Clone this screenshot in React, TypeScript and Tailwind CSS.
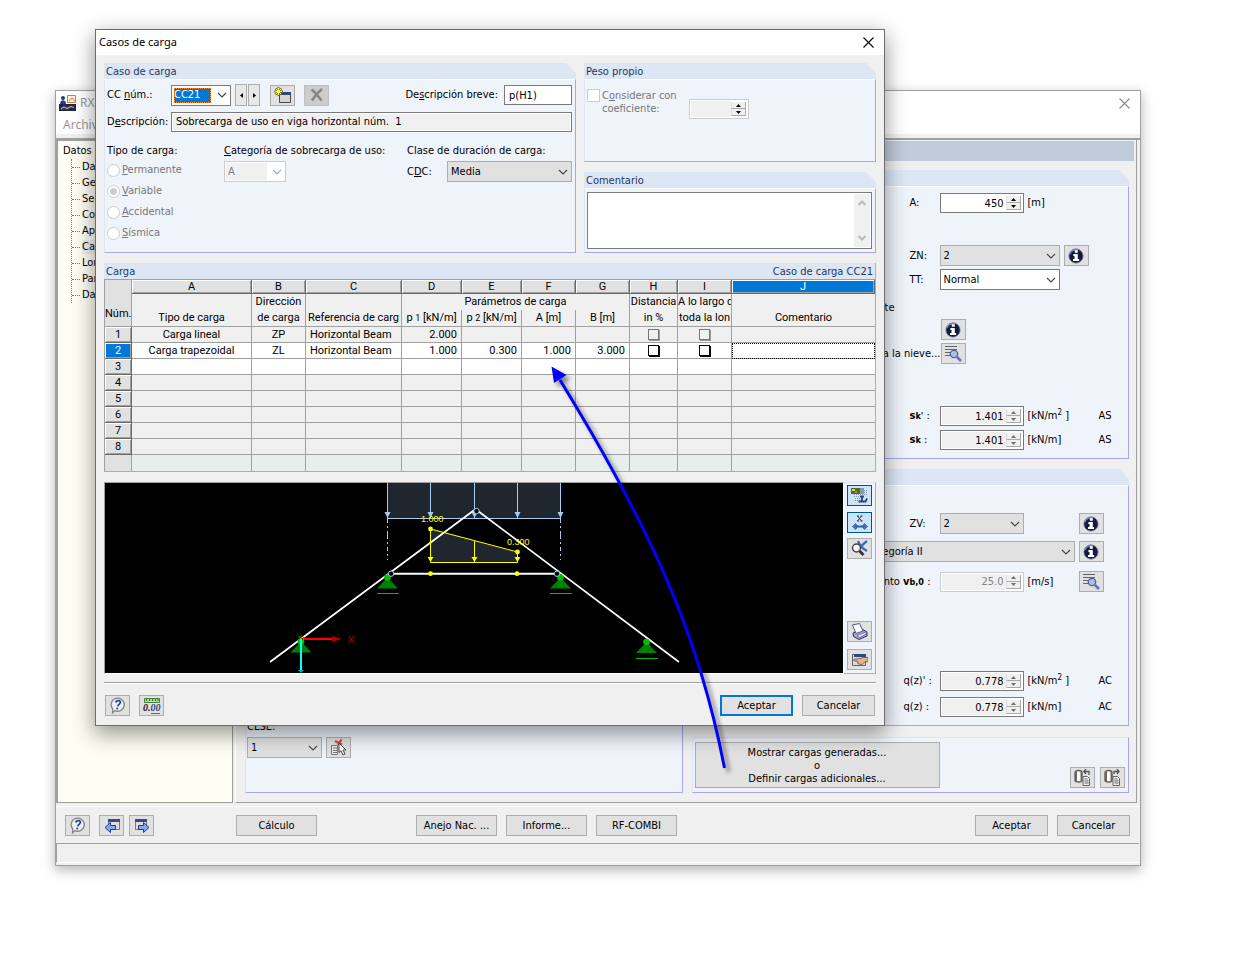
import React, { ReactNode } from "react";

const ICON_BUTTON = "flex h-[21px] w-[25px] shrink-0 items-center justify-center border border-[#adadad] bg-[#e1e1e1]";
const TEXT_BUTTON = "flex h-[21px] shrink-0 items-center justify-center border border-[#adadad] bg-[#e1e1e1]";

function IconButton({ label, children, active }: { label: string; children: ReactNode; active?: boolean }) {
  return (
    <button
      type="button"
      aria-label={label}
      className={
        active
          ? "flex h-[21px] w-[25px] shrink-0 items-center justify-center border border-[#005499] bg-[#cce4f7]"
          : ICON_BUTTON
      }
    >
      {children}
    </button>
  );
}

function Chevron({ className = "text-[#444]" }: { className?: string }) {
  return (
    <svg className={"pointer-events-none absolute top-1/2 right-1 -translate-y-1/2 " + className} width="10" height="6" viewBox="0 0 10 6" fill="none" stroke="currentColor" strokeWidth="1.1">
      <path d="M1 1l4 4 4-4" />
    </svg>
  );
}

function Select({
  label,
  value,
  width,
  tone = "gray",
  disabled,
}: {
  label: string;
  value: string;
  width: string;
  tone?: "gray" | "white";
  disabled?: boolean;
}) {
  const look = disabled
    ? "border-[#cccccc] bg-white bg-[linear-gradient(#f0f0f0,#f0f0f0)] bg-[length:41px_17px] bg-[position:1px_1px] bg-no-repeat text-[#838383]"
    : tone === "gray"
      ? "border-[#adadad] bg-[#e1e1e1]"
      : "border-[#7a7a7a] bg-white";
  return (
    <span className={"relative block shrink-0 " + width}>
      <select aria-label={label} disabled={disabled} className={"block h-[21px] w-full appearance-none border pl-[3px] opacity-100 " + look}>
        <option>{value}</option>
      </select>
      <Chevron className={disabled ? "text-[#a8a8a8]" : "text-[#444]"} />
    </span>
  );
}

function SpinButtons({ label, tone }: { label: string; tone: string }) {
  return (
    <span className={"my-px mr-px flex w-[15px] shrink-0 flex-col " + tone}>
      <button type="button" aria-label={label + " +"} className="flex h-2 w-full items-center justify-center border-r border-b border-l border-[#a9a9a9] border-l-[#e0e0e0] bg-[#f0f0f0]">
        <svg width="5" height="3" viewBox="0 0 5 3" fill="currentColor"><path d="M0 3h5L2.500 0z" /></svg>
      </button>
      <button type="button" aria-label={label + " -"} className="flex h-2 w-full items-center justify-center border-r border-b border-l border-[#a9a9a9] border-l-[#e0e0e0] bg-[#f0f0f0]">
        <svg width="5" height="3" viewBox="0 0 5 3" fill="currentColor"><path d="M0 0h5L2.500 3z" /></svg>
      </button>
    </span>
  );
}

function Spin({ label, value, width, look = "readonly" }: { label: string; value: string; width: string; look?: "edit" | "readonly" | "disabled" }) {
  const frame = look === "disabled" ? "border-[#cccccc]" : "border-[#7a7a7a]";
  const field = look === "edit" ? "bg-white" : look === "disabled" ? "bg-[#f0f0f0] text-[#838383]" : "bg-[#f0f0f0]";
  return (
    <span className={"flex h-5 shrink-0 border bg-white p-px " + frame + " " + width}>
      <input aria-label={label} defaultValue={value} readOnly={look !== "edit"} disabled={look === "disabled"} className={"h-full w-0 min-w-0 flex-1 pr-[2px] text-right " + field} />
      <SpinButtons label={label} tone={look === "edit" ? "text-black" : "text-[#707070]"} />
    </span>
  );
}

function Group({ title, className = "", children }: { title?: ReactNode; className?: string; children?: ReactNode }) {
  return (
    <section className={"flex min-w-0 flex-col " + className}>
      <header className="flex h-4 shrink-0 items-center bg-[#dce6f5] px-[2px] pt-px text-[#1e395b] [clip-path:polygon(0_0,calc(100%-10px)_0,100%_10px,100%_100%,0_100%)]">
        <h2>{title}</h2>
      </header>
      <div className="flex-1 border-t border-r border-b border-l border-t-white border-r-[#a6a6ee] border-b-[#a6a6ee] border-l-[#dce6f5] bg-[#eff3fa]">{children}</div>
    </section>
  );
}

function InfoIcon() {
  return (
    <svg width="16" height="16" viewBox="0 0 16 16">
      <circle cx="8" cy="8" r="7.2" fill="#141c3c" stroke="#8c94b4" strokeWidth=".8" />
      <path d="M2 6a6 5 0 0 1 8-4" fill="none" stroke="#7484c4" strokeWidth="1.6" />
      <path d="M6.800 2.300h3v2.500h-3zM5.400 6h4.400v5h1.300v2H5v-2h1.500V8H5.400z" fill="#fff" />
    </svg>
  );
}

function ListSearchIcon() {
  return (
    <svg width="17" height="16" viewBox="0 0 17 16" fill="none">
      <path d="M0 .5h12M0 3.500h12M0 6.500h5M0 9.500h5" stroke="#666" />
      <circle cx="9" cy="8" r="3.700" fill="#a9c2ec" stroke="#50618e" strokeWidth="1.300" />
      <path d="M12 11l4 4" stroke="#5874bb" strokeWidth="2.500" />
    </svg>
  );
}

function HelpIcon() {
  return (
    <svg width="17" height="17" viewBox="0 0 17 17">
      <path d="M9 1.200a6.500 6.500 0 1 1-3 12.400L3.500 16l.3-4A6.500 6.500 0 0 1 9 1.200z" fill="#f0f0f2" stroke="#858585" strokeWidth="1.300" />
      <path d="M6.800 5.500c.4-2.600 5-2.400 4.500.2-.3 1.600-2.300 1.800-2.600 3.600M8.400 10.700l-.3 1.600" fill="none" stroke="#27449a" strokeWidth="1.800" />
    </svg>
  );
}

function WindowArrowIcon({ forward }: { forward?: boolean }) {
  return (
    <svg width="16" height="17" viewBox="0 0 16 17">
      <path d={forward ? "M1.500 2.500h11v10h-11z" : "M4.500 2.500h11v10h-11z"} fill="#ddd" stroke="#777" />
      <path d={forward ? "M1 2h12v3H1z" : "M4 2h12v3H4z"} fill="#3b4b78" />
      <path d={forward ? "M4.500 8.500h5v-3l5.500 5-5.500 5v-3h-5z" : "M11.500 8.500h-5v-3L1 10.500l5.500 5v-3h5z"} fill="#82a9f4" stroke="#1c3d91" />
    </svg>
  );
}

function DatabaseIcon({ forward }: { forward?: boolean }) {
  return (
    <svg width="17" height="17" viewBox="0 0 17 17" fill="none">
      <path d="M1 3.500C1 .8 8 .8 8 3.500v8c0 2-7 2-7 0z" fill="#fff" stroke="#5b544d" strokeWidth="1.300" />
      <path d="M1 3.500L3 2v11l-2-1zM6.500 2L8 3.500V12l-1.500 1z" fill="#6d645c" />
      <path d="M9 7.500h4.500l2 2v7H9z" fill="#eee" stroke="#666" />
      <path d="M10.500 10h3M10.500 12h4M10.500 14h4" stroke="#666" />
      <path d={forward ? "M10 5V2.500h5M13 0l2 2.500L13 5" : "M15 6V2.500h-5M12 0L9.800 2.500 12 5"} stroke="#555" strokeWidth="1.300" />
    </svg>
  );
}

function NewIcon() {
  return (
    <svg width="18" height="17" viewBox="0 0 18 17" fill="none">
      <path d="M5.500 6.500h11v9h-11z" fill="#d4d4d4" stroke="#484848" />
      <path d="M5 5h12v3H5z" fill="#33496f" />
      <path d="M4.500 0v9M0 4.500h9M1.500 1.500l6 6M7.500 1.500l-6 6" stroke="#777830" strokeWidth="2" />
      <path d="M4.500 1v7M1 4.500h7M2 2l5 5M7 2L2 7" stroke="#ffff37" />
    </svg>
  );
}

function DeleteIcon() {
  return (
    <svg width="14" height="14" viewBox="0 0 14 14" fill="none">
      <path d="M1.500 1.500c4 3 7 7 10 11M12 1C8 4 4.500 8 2 12.500" stroke="#888783" strokeWidth="2.600" />
    </svg>
  );
}

function UnitsIcon() {
  return (
    <svg width="18" height="18" viewBox="0 0 18 18">
      <path d="M1.500 1.500h15v4h-15z" fill="#a5e88a" stroke="#4b8445" />
      <path d="M3.500 2v2M6.500 2v2M9.500 2v2M12.500 2v2M15 2v2" stroke="#32672d" />
      <text x="0" y="14" fontSize="10" fontStyle="italic" fontWeight="700" fontFamily="Liberation Serif, serif" fill="#222">0.<tspan fill="#304879">00</tspan></text>
      <path d="M8 16.500h9" stroke="#52698d" />
    </svg>
  );
}

function RenderIcon() {
  return (
    <svg width="17" height="17" viewBox="0 0 17 17" fill="none">
      <path d="M3 3.500h14M3 5.500h14M3 7.500h13M3 9.500h10M4 11.500h7M4 13.500h8" stroke="#7f97a8" strokeDasharray="1 1" />
      <path d="M0 1h9v6H0z" fill="#3e7139" />
      <path d="M1 2h3v2H1z" fill="#dedb35" />
      <path d="M4 4h2v2H4z" fill="#e9692d" />
      <path d="M9 1h4v6H9z" fill="#8a9aa0" />
      <path d="M9 9.500h4M11 10v4.500h3.500l1.500-3M7.500 14.500h5" stroke="#29486f" strokeWidth="1.800" />
    </svg>
  );
}

function DimensionIcon() {
  return (
    <svg width="16" height="16" viewBox="0 0 16 16" fill="none">
      <path d="M5.500 1l4 5M9.500 1l-4 5M5 1h2M8.500 1h2M5 6h2M8.500 6h2" stroke="#333" />
      <path d="M2 11.500h12" stroke="#365ba8" strokeWidth="2" />
      <path d="M.5 11.500l3-3 1.500 1.500v3l-1.500 1.500zM15.500 11.500l-3-3-1.500 1.500v3l1.500 1.500z" fill="#4872bc" stroke="#254b88" strokeWidth=".6" />
    </svg>
  );
}

function ZoomAxesIcon() {
  return (
    <svg width="17" height="17" viewBox="0 0 17 17" fill="none">
      <path d="M7 1c2 5 5 8 9 10M16 1C12 4 9 7 7 11" stroke="#4168be" strokeWidth="2.200" />
      <circle cx="5.500" cy="8" r="4" fill="#fff" fillOpacity=".8" stroke="#444" strokeWidth="1.400" />
      <path d="M8.500 11l4 4" stroke="#333" strokeWidth="2.800" />
    </svg>
  );
}

function PrinterIcon() {
  return (
    <svg width="17" height="17" viewBox="0 0 17 17" strokeLinejoin="round">
      <path d="M2 10l9-4 5 3v4l-8 3.500-5.500-3z" fill="#a5a5dc" stroke="#33335b" />
      <path d="M1.500 2l7-1.500L12 8l-7 2.500z" fill="#fff" stroke="#555580" />
      <path d="M6 12.500l8-3 1.500 1.500-7 3.500z" fill="#e6e6ff" stroke="#56568d" strokeWidth=".7" />
    </svg>
  );
}

function HandIcon() {
  return (
    <svg width="17" height="14" viewBox="0 0 17 14">
      <path d="M1.500 1.500h13v11h-13z" fill="#d9dad9" stroke="#666" />
      <path d="M3 1h12v3H3z" fill="#2a4886" />
      <path d="M17 4.500h-5L9 5.500l-6 .8c-1 1.500 0 1.700 3 1.700l1 2.700 4 1 3-3h3z" fill="#dfb58e" stroke="#744c32" strokeWidth=".8" />
    </svg>
  );
}

function PickIcon() {
  return (
    <svg width="17" height="17" viewBox="0 0 17 17" fill="none">
      <path d="M1.500 6.500h6v9h-6z" fill="#eee" stroke="#777" />
      <path d="M3 9h4M3 11.500h4M3 13.500h4" stroke="#777" />
      <path d="M5 2l7 3.500M11.500.5L8 6" stroke="#df4444" strokeWidth="2.300" />
      <path d="M9 4v9.500l2-1.700 2 4.200 2-1-2-4h3z" fill="#fff" stroke="#444" />
    </svg>
  );
}

function AppIcon() {
  return (
    <svg width="17" height="16" viewBox="0 0 17 16">
      <path d="M0 9h17v7H0z" fill="#18295f" />
      <circle cx="4" cy="3" r="2" fill="#293e77" />
      <path d="M1 9c0-5 6-5 6 0z" fill="#293e77" />
      <path d="M8.500.5h8v7h-8z" fill="#fff8e7" stroke="#c78141" />
      <path d="M10 6l3-3 3 3M2 14l3-2 3 1.500 4-2 3 1" fill="none" stroke="#ed9e50" strokeWidth="1.300" />
    </svg>
  );
}

function CloseIcon() {
  return (
    <svg width="11" height="11" viewBox="0 0 11 11" fill="none" stroke="currentColor" strokeWidth="1.100">
      <path d="M.5.5l10 10M10.500.5l-10 10" />
    </svg>
  );
}

const treeItems = ["Da", "Ge", "Sec", "Co", "Ap", "Ca", "Lon", "Par", "Da"];

function MainWindow() {
  return (
    <main className="mt-[90px] mr-[93px] ml-[55px] border border-[#a0a0a0] bg-[#f0f0f0] shadow-[0_4px_12px_rgba(0,0,0,0.3)]">
      <div className="h-[43px] bg-white text-[#999]">
        <div className="flex h-6 items-center justify-between pr-[10px] pl-[3px]">
          <h1 className="flex items-center gap-1 font-[Noto_Sans,sans-serif] text-[12px]"><AppIcon />RX-</h1>
          <button type="button" aria-label="Cerrar ventana" className="text-[#888]"><CloseIcon /></button>
        </div>
        <nav className="pt-px pl-[7px] font-[Noto_Sans,sans-serif] text-[12px] leading-[18px]"><a href="#archivo">Archivo</a></nav>
      </div>

      <div className="mt-1 flex border-t-2 border-[#a0a0a0]">
        <aside className="w-[177px] shrink-0 border-t border-r border-b border-l-2 border-[#a0a0a0] bg-[#fdfdf4]">
          <p className="pt-[2px] pl-[5px] leading-4">Datos de</p>
          <ul className="ml-[13px] border-l border-dotted border-[#777]">
            {treeItems.map((item, i) => (
              <li key={i} className="flex h-4 items-center gap-[2px]">
                <span className="w-2 border-t border-dotted border-[#777]" />
                <a href="#item" className={i === 5 ? "w-16 bg-[#f0f0f0]" : ""}>{item}</a>
              </li>
            ))}
          </ul>
        </aside>

        <div className="mr-[3px] ml-[2px] flex-1 border-r border-b border-l border-[#a0a0a0] border-l-white pt-px pb-[9px]">
          <div className="mr-[2px] h-5 bg-[#bfccda]" />
          <div className="mt-[9px] mr-[7px] ml-[9px] grid grid-cols-2 gap-[9px]">
            <Group>
              <div className="flex h-full flex-col justify-end pb-[34px] pl-px">
                <label htmlFor="clse" className="leading-4">CLSE:</label>
                <div className="mt-[2px] flex gap-1">
                  <span className="relative block w-[75px]">
                    <select id="clse" className="block h-[21px] w-full appearance-none border border-[#adadad] bg-[#e1e1e1] pl-[3px]"><option>1</option></select>
                    <Chevron />
                  </span>
                  <IconButton label="Seleccionar"><PickIcon /></IconButton>
                </div>
              </div>
            </Group>

            <div className="flex flex-col">
              <Group>
                <div className="pt-[6px] pb-2 pl-[217px]">
                  <div className="flex items-center"><span className="w-[30px]">A:</span><Spin label="A" value="450" width="w-[84px]" look="edit" /><span className="pl-1">[m]</span></div>
                  <div className="mt-8 flex items-center"><span className="w-[30px]">ZN:</span><Select label="ZN" value="2" width="w-[120px] mr-[4px]" /><IconButton label="Información ZN"><InfoIcon /></IconButton></div>
                  <div className="mt-[3px] flex items-center"><span className="w-[30px]">TT:</span><Select label="TT" value="Normal" width="w-[120px]" tone="white" /></div>
                  <div className="mt-[10px] flex"><span className="-ml-8 w-[17px] text-right leading-4">rte</span></div>
                  <div className="mt-[3px] pl-[31px]"><IconButton label="Información nieve"><InfoIcon /></IconButton></div>
                  <div className="mt-[3px] flex items-center"><span className="-ml-10 w-[71px] text-right whitespace-nowrap">a la nieve...</span><IconButton label="Carga de nieve"><ListSearchIcon /></IconButton></div>
                  <div className="mt-[42px] flex items-center"><span className="w-[30px]"><b>s<small>k'</small></b> :</span><Spin label="sk'" value="1.401" width="w-[84px]" /><span className="w-[75px] pl-1">[kN/m<sup>2</sup> ]</span><span>AS</span></div>
                  <div className="mt-1 flex items-center"><span className="w-[30px]"><b>s<small>k</small></b> :</span><Spin label="sk" value="1.401" width="w-[84px]" /><span className="w-[75px] pl-1">[kN/m]</span><span>AS</span></div>
                </div>
              </Group>

              <Group className="mt-[10px]">
                <div className="flex flex-col pt-[27px] pb-2 pl-[217px]">
                  <div className="flex items-center"><span className="w-[30px]">ZV:</span><Select label="ZV" value="2" width="w-[84px] mr-[55px]" /><IconButton label="Información ZV"><InfoIcon /></IconButton></div>
                  <div className="mt-[7px] -ml-14 flex items-center">
                    <span className="relative block w-[221px]">
                      <select aria-label="Categoría" className="block h-[21px] w-full appearance-none border border-[#adadad] bg-[#e1e1e1] pl-[11px]"><option>Categoría II</option></select>
                      <Chevron />
                    </span>
                    <span className="w-1" /><IconButton label="Información categoría"><InfoIcon /></IconButton>
                  </div>
                  <div className="mt-[9px] -ml-10 flex items-center"><span className="w-[70px] pr-[9px] text-right whitespace-nowrap">nto <b>v<small>b,0</small></b> :</span><Spin label="vb,0" value="25.0" width="w-[84px]" look="disabled" /><span className="w-[55px] pl-1">[m/s]</span><IconButton label="Velocidad del viento"><ListSearchIcon /></IconButton></div>
                  <div className="mt-[79px] flex items-center"><span className="-ml-[6px] w-9">q(z)' :</span><Spin label="q(z)'" value="0.778" width="w-[84px]" /><span className="w-[75px] pl-1">[kN/m<sup>2</sup> ]</span><span>AC</span></div>
                  <div className="mt-[6px] flex items-center"><span className="-ml-[6px] w-9">q(z) :</span><Spin label="q(z)" value="0.778" width="w-[84px]" /><span className="w-[75px] pl-1">[kN/m]</span><span>AC</span></div>
                </div>
              </Group>

              <section className="mt-[11px] flex items-end border border-t-[#dce6f5] border-r-[#a6a6ee] border-b-[#a6a6ee] border-l-[#dce6f5] bg-[#eff3fa] pt-1 pr-[3px] pb-1 pl-[2px]">
                <button type="button" className="h-[46px] w-[245px] border border-[#adadad] bg-[#e1e1e1] pt-px leading-[13px]">Mostrar cargas generadas...<br />o<br />Definir cargas adicionales...</button>
                <div className="ml-auto flex gap-[5px]"><IconButton label="Importar"><DatabaseIcon /></IconButton><IconButton label="Exportar"><DatabaseIcon forward /></IconButton></div>
              </section>
            </div>
          </div>
        </div>
      </div>

      <footer className="mt-[3px] border-t border-white">
        <div className="flex pt-2 pr-[10px] pb-[7px] pl-[9px]">
          <IconButton label="Ayuda"><HelpIcon /></IconButton>
          <span className="w-[9px]" />
          <IconButton label="Anterior"><WindowArrowIcon /></IconButton>
          <span className="w-[5px]" />
          <IconButton label="Siguiente"><WindowArrowIcon forward /></IconButton>
          <button type="button" className={TEXT_BUTTON + " ml-[82px] w-[81px]"}>Cálculo</button>
          <button type="button" className={TEXT_BUTTON + " ml-[99px] w-[81px]"}>Anejo Nac. ...</button>
          <button type="button" className={TEXT_BUTTON + " ml-[9px] w-[81px]"}>Informe...</button>
          <button type="button" className={TEXT_BUTTON + " ml-[9px] w-[81px]"}>RF-COMBI</button>
          <button type="button" className={TEXT_BUTTON + " ml-auto w-[73px]"}>Aceptar</button>
          <button type="button" className={TEXT_BUTTON + " ml-[9px] w-[73px]"}>Cancelar</button>
        </div>
        <div className="mr-px mb-[2px] h-5 border-t border-b border-l border-[#a0a0a0] border-b-white" />
      </footer>
    </main>
  );
}

const loadTypes: [string, string][] = [["P", "ermanente"], ["V", "ariable"], ["A", "ccidental"], ["S", "ísmica"]];

function CaseGroup() {
  return (
    <Group title="Caso de carga" className="flex-[472]">
      <div className="px-[2px] pt-1">
        <div className="flex items-center pr-px">
          <label htmlFor="case" className="w-16">CC <u>n</u>úm.:</label>
          <span className="relative block w-[60px]">
            <select id="case" className="block h-[21px] w-full appearance-none border border-[#7a7a7a] bg-white bg-[linear-gradient(#0078d7,#0078d7)] bg-[length:37px_15px] bg-[position:2px_2px] bg-no-repeat pl-[2px] text-white"><option>CC21</option></select>
            <span className="pointer-events-none absolute top-[3px] left-[3px] h-[15px] w-[37px] border border-dotted border-[#ff8728]" />
            <Chevron />
          </span>
          <button type="button" aria-label="Caso anterior" className="ml-1 flex h-[22px] w-3 items-center justify-center border border-[#adadad] bg-[#e8e8e8]"><svg width="3" height="5" viewBox="0 0 3 5"><path d="M3 0v5L0 2.500z" /></svg></button>
          <button type="button" aria-label="Caso siguiente" className="ml-px flex h-[22px] w-3 items-center justify-center border border-[#adadad] bg-[#e8e8e8]"><svg width="3" height="5" viewBox="0 0 3 5"><path d="M0 0v5l3-2.500z" /></svg></button>
          <span className="w-[10px]" />
          <IconButton label="Nuevo"><NewIcon /></IconButton>
          <span className="w-[9px]" />
          <button type="button" disabled aria-label="Borrar" className="flex h-[21px] w-[25px] items-center justify-center border border-[#bfbfbf] bg-[#cccccc]"><DeleteIcon /></button>
          <label htmlFor="short" className="ml-auto">De<u>s</u>cripción breve:</label>
          <input id="short" defaultValue="p(H1)" className="ml-[6px] h-5 w-[68px] border border-[#7a7a7a] bg-white px-1" />
        </div>
        <div className="mt-[6px] flex items-center pr-px">
          <label htmlFor="desc" className="w-16">D<u>e</u>scripción:</label>
          <span className="flex h-5 flex-1 border border-[#7a7a7a] bg-white p-px"><input id="desc" readOnly defaultValue="Sobrecarga de uso en viga horizontal núm.  1" className="w-full bg-[#f0f0f0] px-[3px] whitespace-pre" /></span>
        </div>
        <div className="mt-[11px] flex pr-px">
          <fieldset className="w-[117px]">
            <legend className="leading-4">Tipo de carga:</legend>
            <div className="flex flex-col gap-[5px] pt-[3px]">
              {loadTypes.map(([key, rest], i) => (
                <label key={key} className="flex h-4 items-center gap-[2px] text-[#777]">
                  <input type="radio" name="load-type" defaultChecked={i === 1} disabled className="h-[13px] w-[13px] appearance-none rounded-full border border-[#cccccc] bg-white checked:bg-[radial-gradient(circle,#cccccc_3px,white_4px)]" />
                  <span><u>{key}</u>{rest}</span>
                </label>
              ))}
            </div>
          </fieldset>
          <div className="w-[183px]">
            <p className="leading-4"><u>C</u>ategoría de sobrecarga de uso:</p>
            <div className="pt-[2px]"><Select label="Categoría de sobrecarga de uso" value="A" width="w-[62px]" disabled /></div>
          </div>
          <div className="flex-1">
            <p className="leading-4">Clase de duración de carga:</p>
            <div className="flex items-center pt-[2px]"><span className="w-10">C<u>D</u>C:</span><Select label="CDC" value="Media" width="w-[125px]" /></div>
          </div>
        </div>
      </div>
    </Group>
  );
}

const rowNumbers = [1, 2, 3, 4, 5, 6, 7, 8];
const columnLetters = ["A", "B", "C", "D", "E", "F", "G", "H", "I", "J"];
const cellData: Record<number, string[]> = {
  1: ["Carga lineal", "ZP", "Horizontal Beam", "2.000", "", "", ""],
  2: ["Carga trapezoidal", "ZL", "Horizontal Beam", "1.000", "0.300", "1.000", "3.000"],
};
const HEAD_CELL = "overflow-hidden border-r border-[#a0a0a0] p-0 align-top font-normal whitespace-nowrap";
const HEAD_BOTTOM = HEAD_CELL + " border-b";
const RAISED = "border-r border-b border-[#696969] p-0 font-normal shadow-[inset_1px_1px_#fff,inset_-1px_-1px_#a0a0a0]";

function LoadTable() {
  return (
    <section className="mt-[10px] border-r border-b border-[#a6a6ee]">
      <header className="flex h-4 items-center justify-between bg-[#dce6f5] px-[2px] pt-px text-[#1e395b]"><h2>Carga</h2><span>Caso de carga CC21</span></header>
      <table className="w-full table-fixed border-separate border-spacing-0 border-t border-l border-[#a0a0a0] bg-[#f0f0f0] font-[Roboto,sans-serif] leading-[15px]">
        <colgroup>
          <col className="w-[27px]" /><col className="w-[120px]" /><col className="w-[54px]" /><col className="w-[96px]" /><col className="w-[60px]" /><col className="w-[60px]" /><col className="w-[54px]" /><col className="w-[54px]" /><col className="w-[48px]" /><col className="w-[54px]" /><col />
        </colgroup>
        <thead>
          <tr className="h-[14px] leading-[13px]">
            <th rowSpan={3} className="border-r border-b border-[#a0a0a0] bg-[#e1e1e1] p-0 pt-5 font-normal">Núm.</th>
            {columnLetters.map((c) => (
              <th key={c} className={RAISED + (c === "J" ? " bg-[#0078d7] text-white" : " bg-[#e1e1e1]")}>{c}</th>
            ))}
          </tr>
          <tr className="h-4">
            <th className={HEAD_CELL} /><th className={HEAD_CELL}>Dirección</th><th className={HEAD_CELL} />
            <th colSpan={4} className={HEAD_CELL}>Parámetros de carga</th>
            <th className={HEAD_CELL}>Distancia</th><th className={HEAD_CELL}>A lo largo d</th><th className="p-0" />
          </tr>
          <tr className="h-[17px]">
            <th className={HEAD_BOTTOM}>Tipo de carga</th><th className={HEAD_BOTTOM}>de carga</th><th className={HEAD_BOTTOM}>Referencia de carg</th>
            <th className={HEAD_BOTTOM}>p <small>1</small> [kN/m]</th><th className={HEAD_BOTTOM}>p <small>2</small> [kN/m]</th><th className={HEAD_BOTTOM}>A [m]</th><th className={HEAD_BOTTOM}>B [m]</th>
            <th className={HEAD_BOTTOM}>in %</th><th className={HEAD_BOTTOM}>toda la lon</th><th className="border-b border-[#a0a0a0] p-0 align-top font-normal">Comentario</th>
          </tr>
        </thead>
        <tbody>
          {rowNumbers.map((n) => (
            <tr key={n} className={n === 2 || n === 3 ? "h-4 bg-white" : "h-4"}>
              <th className={RAISED + (n === 2 ? " bg-[#0078d7] text-white" : " bg-[#e1e1e1]")}>{n}</th>
              {columnLetters.map((c, i) => (
                <td
                  key={c}
                  className={
                    "overflow-hidden border-b border-[#a0a0a0] py-0 whitespace-nowrap " +
                    (i < 9 ? "border-r " : n === 2 ? "outline outline-dotted -outline-offset-1 outline-black " : "") +
                    (i < 2 ? "px-0 text-center" : i === 2 ? "px-1" : i < 7 ? "pr-1 pl-0 text-right" : "px-0")
                  }
                >
                  {n < 3 && (i === 7 || i === 8) ? (
                    <input type="checkbox" aria-label={c + n} disabled={n === 1} className={"mx-auto block h-[11px] w-[11px] appearance-none border " + (n === 1 ? "border-[#777] shadow-[1px_1px_#999]" : "border-black shadow-[1px_1px_#000]")} />
                  ) : (
                    cellData[n]?.[i]
                  )}
                </td>
              ))}
            </tr>
          ))}
          <tr className="h-4 bg-[#e8eeee]">
            <th className="border-r border-[#a0a0a0] bg-[#e1e1e1] p-0" />
            {columnLetters.map((c, i) => <td key={c} className={i < 9 ? "border-r border-[#a0a0a0] p-0" : "p-0"} />)}
          </tr>
        </tbody>
      </table>
    </section>
  );
}

function Support({ x, y, base = true }: { x: number; y: number; base?: boolean }) {
  return (
    <g>
      <path d={`M${x} ${y}l10.500 11h-21z`} fill="#008000" />
      <circle cx={x} cy={y} r="3.300" fill="#00bf00" />
      {base && <path d={`M${x - 11} ${y + 16}h22`} stroke="#00bf00" shapeRendering="crispEdges" />}
    </g>
  );
}

function FrameDrawing() {
  return (
    <svg className="block h-[190px] w-full bg-black" viewBox="105 483 739 190" preserveAspectRatio="xMinYMin slice" fill="none">
      <path d="M387 483h174v35H387zM430 528l87 24v10h-87z" fill="#20262e" />
      <path d="M387.500 483v35.500M430.500 483v35.500M474.500 483v35.500M517.500 483v35.500M560.500 483v35.500M387 518.500h174" stroke="#a6caf0" />
      <path d="M387.500 519v41M560.500 519v41" stroke="#a6caf0" strokeDasharray="4 3 2 3 8 3 2 3" />
      {[387.5, 430.5, 474.5, 517.5, 560.5].map((x) => <path key={x} d={`M${x - 3} 512h6l-2 4-1 2-1-2z`} fill="#a6caf0" />)}
      <path d="M270 662L475 509.500M476 509.500L679 662" stroke="#fff" strokeWidth="1.700" />
      <path d="M391 573.700h166" stroke="#fff" strokeWidth="2" />
      <path d="M430.500 529v33.500h87V552zM474.500 541v21" stroke="#ff0" />
      {[430.5, 474.5, 517.5].map((x) => <path key={x} d={`M${x - 3} 557h6l-3 5z`} fill="#ff0" />)}
      {[[430.5, 529], [517.5, 552], [430.5, 573.7], [517, 573.7]].map(([x, y]) => <circle key={x + y} cx={x} cy={y} r="2.400" fill="#ff0" />)}
      <g fill="#ff0" fontSize="9" fontFamily="Liberation Sans, sans-serif"><text x="421" y="522">1.000</text><text x="507" y="545">0.300</text></g>
      <Support x={387.5} y={577.5} /><Support x={560.5} y={577.5} /><Support x={646.5} y={642} /><Support x={301} y={641.5} base={false} />
      {[[476.5, 511], [391, 573.7], [557, 573.7]].map(([x, y]) => <circle key={x} cx={x} cy={y} r="2.700" fill="#000" stroke="#a6caf0" />)}
      <path d="M301 639h31" stroke="#f00" strokeWidth="2" />
      <path d="M332 636l10 3-10 3z" fill="#b00000" />
      <path d="M349 636l5 7M354 636l-5 7" stroke="#d00" />
      <path d="M301 639v32" stroke="#0ff" strokeWidth="2" />
      <path d="M298 670h6l-3 3z" fill="#00b0b0" />
      <path d="M298.500 637h5v5" stroke="#00bf00" />
    </svg>
  );
}

function Dialog() {
  return (
    <div role="dialog" aria-label="Casos de carga" className="absolute top-[29px] right-[349px] left-[95px] border border-[#6d6d6d] bg-[#f0f0f0] shadow-[0_7px_20px_1px_rgba(0,0,0,0.4)]">
      <div className="flex h-[25px] items-center justify-between bg-white pr-[10px] pb-px pl-[3px]">
        <h1 className="font-[Noto_Sans,sans-serif] text-[11px]">Casos de carga</h1>
        <button type="button" aria-label="Cerrar"><CloseIcon /></button>
      </div>
      <div className="px-2 pt-2 pb-[9px]">
        <div className="flex gap-2">
          <CaseGroup />
          <div className="flex flex-[292] flex-col">
            <Group title="Peso propio">
              <div className="flex h-[81px] items-start pt-[9px] pl-[2px] text-[#777]">
                <label className="flex w-[102px] gap-[2px] leading-[13px]">
                  <input type="checkbox" disabled className="h-[13px] w-[13px] shrink-0 appearance-none border border-[#cccccc] bg-white" />
                  <span className="whitespace-nowrap">C<u>o</u>nsiderar con<br />coeficiente:</span>
                </label>
                <span className="mt-[10px] flex h-5 w-[60px] border border-[#cccccc] bg-white p-px">
                  <input aria-label="Coeficiente" disabled className="h-full w-0 flex-1 bg-[#f0f0f0]" />
                  <SpinButtons label="Coeficiente" tone="text-black" />
                </span>
              </div>
            </Group>
            <Group title="Comentario" className="mt-[10px]">
              <div className="pt-[3px] pr-[3px] pb-[3px] pl-[2px]">
                <div className="flex h-[57px] border border-[#7a7a7a] bg-white p-px">
                  <textarea aria-label="Comentario" className="block min-w-0 flex-1 resize-none overflow-hidden" />
                  <div className="flex w-4 flex-col items-center justify-between bg-[#f0f0f0] py-[6px]">
                    <svg width="8" height="6" viewBox="0 0 8 6" fill="none" stroke="#bbb" strokeWidth="2"><path d="M.5 5L4 1.500 7.500 5" /></svg>
                    <svg width="8" height="6" viewBox="0 0 8 6" fill="none" stroke="#bbb" strokeWidth="2"><path d="M.5 1L4 4.500 7.500 1" /></svg>
                  </div>
                </div>
              </div>
            </Group>
          </div>
        </div>

        <LoadTable />

        <div className="mt-[10px] flex">
          <div className="min-w-0 flex-1 border-t border-r border-b border-l border-[#a0a0a0] border-r-white border-b-white"><FrameDrawing /></div>
          <div className="flex w-[32px] flex-col border-t border-r border-b border-t-[#dce6f5] border-r-[#a6a6ee] border-b-[#a6a6ee] bg-[#eff3fa] pt-[2px] pb-[3px] pl-[3px]">
            <IconButton label="Vista" active><RenderIcon /></IconButton>
            <span className="h-[6px]" />
            <IconButton label="Cotas" active><DimensionIcon /></IconButton>
            <span className="h-[5px]" />
            <IconButton label="Vista completa"><ZoomAxesIcon /></IconButton>
            <span className="flex-1" />
            <IconButton label="Imprimir"><PrinterIcon /></IconButton>
            <span className="h-[7px]" />
            <IconButton label="Propiedades"><HandIcon /></IconButton>
          </div>
        </div>

        <div className="mt-2 border-t border-b border-t-[#a0a0a0] border-b-white" />
        <div className="mt-[11px] flex pr-px pl-px">
          <IconButton label="Ayuda"><HelpIcon /></IconButton>
          <span className="w-[9px]" />
          <IconButton label="Unidades"><UnitsIcon /></IconButton>
          <button type="button" className="ml-auto h-[21px] w-[73px] border-2 border-[#0078d7] bg-[#e1e1e1]">Aceptar</button>
          <button type="button" className={TEXT_BUTTON + " ml-[9px] w-[73px]"}>Cancelar</button>
        </div>
      </div>
    </div>
  );
}

export default function App() {
  return (
    <div className="relative flow-root min-h-screen overflow-hidden bg-white font-[DejaVu_Sans_Condensed,Roboto,sans-serif] text-[11px] leading-[14px] text-black [&_small]:text-[9px] [&_sup]:text-[8px]">
      <MainWindow />
      <Dialog />
      <svg className="pointer-events-none absolute top-[360px] left-[540px] drop-shadow-[4px_4px_2px_rgba(0,0,0,0.45)]" width="200" height="420" viewBox="540 360 200 420">
        <path d="M724.500 768C700 640 655 535 560 380" fill="none" stroke="#00f" strokeWidth="3" />
        <path d="M551.500 366.500l15 8.500-12.500 8z" fill="#00f" />
      </svg>
    </div>
  );
}
